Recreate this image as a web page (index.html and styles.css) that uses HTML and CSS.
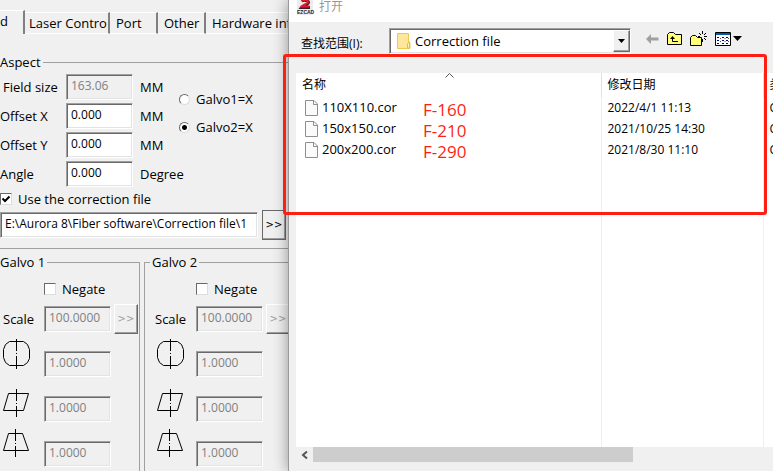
FILE: index.html
```html
<!DOCTYPE html>
<html lang="en">
<head>
    <meta charset="UTF-8">
    <title>EZCAD</title>
    <link rel="stylesheet" href="styles.css">
</head>
<body>
<svg width="0" height="0" class="defs">
    <symbol id="barrel" viewBox="0 0 30 45">
        <path d="M6.500 2.500H20.500L24.500 5.500L26.500 10.500V19.500L24.500 23.500L20.500 26.500H6.500L2.500 23.500L.5 18.500V10.500L2.500 5.500Z"/>
        <path d="M13.500 0V12M13.500 14V15M13.500 17V30"/>
    </symbol>
    <symbol id="skew" viewBox="0 0 30 45">
        <path d="M5.500 9.500H25.500L20.500 26.500H.5Z"/>
        <path d="M13.500 5V17M13.500 19V20M13.500 22V33"/>
    </symbol>
    <symbol id="trapezoid" viewBox="0 0 30 45">
        <path d="M5.500 4.500H19.500L25.500 21.500H.5Z"/>
        <path d="M12.500 0V12M12.500 14V15M12.500 17V28"/>
    </symbol>
    <symbol id="doc" viewBox="0 0 13 16">
        <path d="M.5 .5H9L12.500 4V15.500H.5Z" fill="#fafafa" stroke="#8e8e8e"/>
        <path d="M8.500 .5V4.500H12.500" fill="none" stroke="#8e8e8e"/>
    </symbol>
</svg>

<div class="app">
    <div class="settings">
        <div class="tabs">
            <button class="tab active">d</button>
            <button class="tab laser">Laser Contro</button>
            <button class="tab">Port</button>
            <button class="tab">Other</button>
            <button class="tab last">Hardware info</button>
        </div>

        <div class="sheet">
            <fieldset class="aspect">
                <legend>Aspect</legend>
                <div class="aspect-body">
                    <div class="fields">
                        <label class="indent" for="size">Field size</label>
                        <input id="size" class="box" type="text" value="163.06" disabled>
                        <span>MM</span>
                        <label for="offx">Offset X</label>
                        <input id="offx" class="box" type="text" value="0.000">
                        <span>MM</span>
                        <label for="offy">Offset Y</label>
                        <input id="offy" class="box" type="text" value="0.000">
                        <span>MM</span>
                        <label for="angle">Angle</label>
                        <input id="angle" class="box" type="text" value="0.000">
                        <span>Degree</span>
                    </div>
                    <div class="radios">
                        <label><input type="radio" name="galvo">Galvo1=X</label>
                        <label><input type="radio" name="galvo" checked>Galvo2=X</label>
                    </div>
                </div>
            </fieldset>
            <label class="check"><input type="checkbox" checked>Use the correction file</label>
            <div class="path">
                <input class="box" type="text" aria-label="Correction file" value="E:\Aurora 8\Fiber software\Correction file\1">
                <button class="more">&gt;&gt;</button>
            </div>
        </div>

        <div class="galvos">
            <fieldset class="galvo first">
                <legend>Galvo 1</legend>
                <label class="check negate"><input type="checkbox">Negate</label>
                <div class="row scale">
                    <label for="scale1">Scale</label>
                    <input id="scale1" class="box" type="text" value="100.0000" disabled>
                    <button class="more" disabled>&gt;&gt;</button>
                </div>
                <div class="row">
                    <svg class="shape"><use href="#barrel"/></svg>
                    <input class="box" type="text" aria-label="Barrel 1" value="1.0000" disabled>
                </div>
                <div class="row">
                    <svg class="shape"><use href="#skew"/></svg>
                    <input class="box" type="text" aria-label="Skew 1" value="1.0000" disabled>
                </div>
                <div class="row">
                    <svg class="shape"><use href="#trapezoid"/></svg>
                    <input class="box" type="text" aria-label="Trapezoid 1" value="1.0000" disabled>
                </div>
            </fieldset>
            <fieldset class="galvo second">
                <legend>Galvo 2</legend>
                <label class="check negate"><input type="checkbox">Negate</label>
                <div class="row scale">
                    <label for="scale2">Scale</label>
                    <input id="scale2" class="box" type="text" value="100.0000" disabled>
                    <button class="more" disabled>&gt;&gt;</button>
                </div>
                <div class="row">
                    <svg class="shape"><use href="#barrel"/></svg>
                    <input class="box" type="text" aria-label="Barrel 2" value="1.0000" disabled>
                </div>
                <div class="row">
                    <svg class="shape"><use href="#skew"/></svg>
                    <input class="box" type="text" aria-label="Skew 2" value="1.0000" disabled>
                </div>
                <div class="row">
                    <svg class="shape"><use href="#trapezoid"/></svg>
                    <input class="box" type="text" aria-label="Trapezoid 2" value="1.0000" disabled>
                </div>
            </fieldset>
        </div>
    </div>

    <div class="dialog" lang="zh-CN">
        <div class="title">
            <svg class="logo" width="16" height="15" viewBox="0 0 16 15">
                <rect width="16" height="15" fill="#ececf0"/>
                <path d="M4.500 1C6 0 11.500 0 11.500 2.500C11.500 4.500 7 5.500 5 7.500H13" fill="none" stroke="#3a2030" stroke-width="3"/>
                <path d="M4.500 1C6 -.5 11 -.5 11 2C11 4 6.500 4.500 4.500 6.500H12.500" fill="none" stroke="#d8202c" stroke-width="2"/>
                <text x="0" y="14" font-family="Liberation Sans" font-weight="bold" font-size="5" fill="#223">EZCAD</text>
            </svg>
            <span>打开</span>
        </div>

        <div class="toolbar">
            <label for="folder">查找范围(I):</label>
            <div class="combo">
                <svg width="14" height="16" viewBox="0 0 14 16">
                    <path d="M.5 .5H11.500V10.500L13 9.500V15.500H.5Z" fill="#ffe69a" stroke="#f0c850"/>
                    <path d="M10.500 15V10.500L12.500 9V15Z" fill="#fff0b8" stroke="#e8bc40"/>
                </svg>
                <select id="folder"><option>Correction file</option></select>
                <span class="drop"><svg width="7" height="4"><path d="M0 0H7L3.500 4Z"/></svg></span>
            </div>
            <div class="tools">
                <button aria-label="Back">
                    <svg width="13" height="16" viewBox="0 0 13 16"><path d="M0 8L5 3V6.500H12.500V9.500H5V13Z" fill="#a0a0a0"/></svg>
                </button>
                <button aria-label="Up">
                    <svg width="15" height="16" viewBox="0 0 15 16">
                        <path d="M.5 13.500V3.500L2.500 1.500H6.500L8.500 3.500H14.500V13.500Z" fill="#ffff7a" stroke="#000"/>
                        <path d="M5.500 6V10.500H11" stroke="#000" fill="none"/>
                        <path d="M3 8L5.500 5L8 8Z"/>
                    </svg>
                </button>
                <button aria-label="New folder">
                    <svg width="17" height="16" viewBox="0 0 17 16">
                        <path d="M.5 14.500V6.500L2.500 4.500H5.500L7.500 6.500H11.500V14.500Z" fill="#ffff7a" stroke="#000"/>
                        <path d="M12.500 0V3M12.500 8V11M8 5.500H10M14 5.500H17M9 2L11 4M16 2L14 4M14 7L16 9" stroke="#000" fill="none"/>
                    </svg>
                </button>
                <button aria-label="View menu">
                    <svg width="28" height="16" viewBox="0 0 28 16">
                        <path d="M.5 1.500H15.500V14.500H.5Z" fill="#fff" stroke="#000"/>
                        <path d="M1 2H15V4H1Z" fill="#0058a8"/>
                        <path d="M2 6.500H4M7 6.500H9M11 6.500H13M2 9.500H4M7 9.500H9M11 9.500H13M2 12.500H4M7 12.500H9M11 12.500H13" stroke="#000080"/>
                        <path d="M5 7.500H6M9.500 7.500H10.500M13 7.500H14M5 10.500H6M9.500 10.500H10.500M13 10.500H14" stroke="#555"/>
                        <path d="M18 5H27L22.500 10Z"/>
                    </svg>
                </button>
            </div>
        </div>

        <div class="list">
            <table>
                <colgroup><col class="c-name"><col class="c-date"><col class="c-type"></colgroup>
                <thead>
                <tr><th>名称</th><th>修改日期</th><th>类型</th></tr>
                </thead>
                <tbody>
                <tr><td><svg class="doc"><use href="#doc"/></svg>110X110.cor</td><td>2022/4/1 11:13</td><td>COR 文件</td></tr>
                <tr><td><svg class="doc"><use href="#doc"/></svg>150x150.cor</td><td>2021/10/25 14:30</td><td>COR 文件</td></tr>
                <tr><td><svg class="doc"><use href="#doc"/></svg>200x200.cor</td><td>2021/8/30 11:10</td><td>COR 文件</td></tr>
                <tr class="rest"><td></td><td></td><td></td></tr>
                </tbody>
            </table>
            <svg class="sort" width="9" height="5"><path d="M.5 4.500L4.500 .5L8.500 4.500" fill="none" stroke="#555"/></svg>
        </div>

        <div class="scrollbar">
            <button aria-label="Scroll left"><svg width="7" height="8"><path d="M6 .5L2 4L6 7.500" fill="none" stroke="#555" stroke-width="2"/></svg></button>
            <div class="thumb"></div>
        </div>

        <!-- 标注 -->
        <div class="mark">
            <p>F-160</p>
            <p>F-210</p>
            <p>F-290</p>
        </div>
    </div>
</div>
</body>
</html>
```
FILE: styles.css
```css
*{
    margin: 0;
    padding: 0;
    box-sizing: border-box;
}

body{
    font: 13px/16px "Open Sans", "Noto Sans CJK SC", sans-serif;
    color: #000;
    background-color: #f0f0f0;
}

button, input, select{
    font: inherit;
    color: inherit;
}

fieldset{
    border: 0;
    min-width: 0;
}

.defs{
    position: absolute;
}

.app{
    display: flex;
    height: 100vh;
    overflow: hidden;
}

/* 左侧设置 */
.settings{
    flex: none;
    width: 288px;
    overflow: hidden;
    white-space: nowrap;
}

.tabs{
    display: flex;
    align-items: flex-end;
    height: 34px;
}

.tab{
    flex: none;
    width: 48px;
    height: 22px;
    padding-left: 6px;
    text-align: left;
    white-space: nowrap;
    background-color: #f0f0f0;
    border: 0;
    border-top: 1px solid #fff;
    border-bottom: 1px solid #fff;
    border-right: 2px solid #808080;
}

.tab.laser{
    width: 85px;
    padding-left: 4px;
}

.tab.last{
    width: auto;
    border-right: 0;
}

.tab.active{
    width: 25px;
    height: 24px;
    padding: 0 0 4px;
    border-bottom: 0;
}

.sheet{
    height: 215px;
    padding-top: 20px;
    border-bottom: 1px solid #a0a0a0;
}

legend{
    padding-right: 2px;
}

.aspect{
    border-top: 1px solid #a0a0a0;
}

.aspect-body{
    display: flex;
    height: 120px;
    padding-top: 2px;
}

.fields{
    display: grid;
    grid-template-columns: 66px 67px auto;
    grid-auto-rows: 29px;
    align-items: center;
    width: 179px;
}

.fields span{
    padding-left: 7px;
}

.indent{
    padding-left: 3px;
}

.box{
    width: 67px;
    height: 26px;
    padding: 0 4px 3px;
    font-size: 12px;
    background-color: #fff;
    border: 1px solid;
    border-color: #a0a0a0 #fff #fff #a0a0a0;
    box-shadow: inset 1px 1px #696969, inset -1px -1px #e3e3e3;
    outline: 0;
}

.box:disabled{
    color: #808080;
    background-color: #f0f0f0;
}

.radios{
    padding-top: 13px;
}

.radios label{
    display: flex;
    align-items: center;
    gap: 6px;
    height: 28px;
}

input[type=radio], input[type=checkbox]{
    appearance: none;
    flex: none;
    width: 12px;
    height: 12px;
    background-color: #fff;
    border: 1px solid;
    border-color: #696969 #ddd #ddd #696969;
}

input[type=radio]{
    width: 11px;
    height: 11px;
    border-radius: 50%;
}

input[type=radio]:checked{
    background-image: radial-gradient(#000 2px, transparent 3px);
}

input[type=checkbox]:checked{
    background: #fff url("data:image/svg+xml,%3Csvg xmlns='http://www.w3.org/2000/svg' viewBox='0 0 10 10'%3E%3Cpath d='M1.500 4.500L4 7L8.500 2.500' fill='none' stroke='%23000' stroke-width='2'/%3E%3C/svg%3E");
}

.check{
    display: flex;
    align-items: center;
    gap: 6px;
    height: 18px;
}

.path{
    display: flex;
    align-items: center;
    gap: 4px;
    height: 30px;
    margin-top: 2px;
}

.path .box{
    width: 258px;
}

.more{
    width: 24px;
    height: 30px;
    font: 10px/24px "DejaVu Sans", sans-serif;
    background-color: #f0f0f0;
    border: 1px solid;
    border-color: #fff #696969 #696969 #fff;
    box-shadow: inset -1px -1px #a0a0a0;
}

.path .more{
    border-color: #696969;
}

.more:disabled{
    color: #a0a0a0;
}

.galvos{
    display: flex;
    gap: 4px;
    padding-top: 5px;
}

.galvo{
    flex: none;
    width: 160px;
    height: 240px;
    padding-left: 10px;
    border: 1px solid #a0a0a0;
}

.galvo legend{
    margin-left: -5px;
    padding-left: 2px;
}

.galvo.first{
    width: 140px;
    padding-left: 3px;
    border-left: 0;
}

.galvo.first legend{
    margin-left: -3px;
    padding-left: 0;
}

.galvo.second .shape{
    margin-left: 2px;
}

.negate{
    margin-left: 41px;
    padding-top: 3px;
    height: 34px;
}

.row{
    display: grid;
    grid-template-columns: 41px 67px 24px;
    height: 45px;
}

.row .box{
    margin-top: 12px;
}

.row.scale{
    align-items: center;
    height: 30px;
    margin-bottom: 5px;
}

.row.scale .box{
    margin-top: 0;
}

.row .more{
    margin-left: 3px;
}

.shape{
    width: 30px;
    height: 45px;
    fill: none;
    stroke: #000;
}

/* 打开对话框 */
.dialog{
    position: relative;
    flex: 1;
    min-width: 0;
    display: flex;
    flex-direction: column;
    background-color: #f0f0f0;
    border-left: 1px solid #999;
    box-shadow: 0 0 14px rgba(0, 0, 0, 0.4);
    font-size: 12px;
}

.title{
    display: flex;
    gap: 6px;
    height: 22px;
    padding-left: 8px;
    color: #999;
    background-color: #fff;
}

.title span{
    line-height: 14px;
}

.logo{
    flex: none;
    overflow: visible;
}

.toolbar{
    display: flex;
    align-items: center;
    height: 51px;
    padding: 0 8px 14px 12px;
}

.toolbar label{
    flex: none;
    width: 88px;
    padding-top: 6px;
}

.combo{
    display: flex;
    align-items: center;
    width: 242px;
    height: 26px;
    padding-left: 7px;
    background-color: #fff;
    border: 1px solid;
    border-color: #a0a0a0 #fff #fff #a0a0a0;
    box-shadow: inset 1px 1px #696969, inset -1px -1px #e3e3e3;
}

.combo select{
    flex: 1;
    appearance: none;
    padding-left: 4px;
    font-size: 13px;
    background: none;
    border: 0;
    outline: 0;
}

.drop{
    display: flex;
    align-items: center;
    justify-content: center;
    width: 17px;
    height: 22px;
    background-color: #f0f0f0;
    border: 1px solid;
    border-color: #fff #696969 #696969 #fff;
    box-shadow: inset -1px -1px #a0a0a0;
}

.tools{
    display: flex;
    gap: 8px;
    padding: 0 0 3px 15px;
}

.tools button{
    height: 16px;
    background: none;
    border: 0;
}

.tools svg{
    display: block;
}

.list{
    position: relative;
    flex: 1;
    min-height: 0;
    margin-left: 7px;
    overflow: hidden;
    background-color: #fff;
}

table{
    width: 600px;
    height: 100%;
    table-layout: fixed;
    border-collapse: collapse;
}

.c-name{
    width: 305px;
}

.c-date{
    width: 162px;
}

th, td{
    height: 21px;
    padding-left: 6px;
    text-align: left;
    font-weight: normal;
    white-space: nowrap;
    border-right: 1px solid #e8f1fa;
}

th{
    height: 24px;
    border-right-color: #e0e0e0;
}

td:first-child{
    padding-left: 9px;
    font-size: 13px;
}

.rest td{
    height: auto;
}

.doc{
    width: 13px;
    height: 16px;
    margin-right: 4px;
    vertical-align: middle;
}

.sort{
    position: absolute;
    left: 149px;
    top: 0;
}

.scrollbar{
    display: flex;
    height: 24px;
    padding-left: 7px;
}

.scrollbar button{
    width: 17px;
    height: 15px;
    background: none;
    border: 0;
}

.thumb{
    width: 320px;
    height: 15px;
    background-color: #cdcdcd;
}

.mark{
    position: absolute;
    left: -6px;
    right: 6px;
    top: 54px;
    height: 161px;
    padding: 42px 0 0 137px;
    font-size: 17px;
    line-height: 21px;
    color: #ff1f12;
    border: 3px solid #ff1f12;
    border-radius: 3px;
}
```
